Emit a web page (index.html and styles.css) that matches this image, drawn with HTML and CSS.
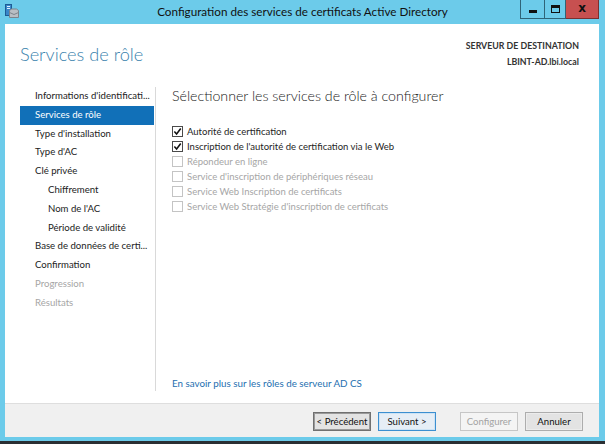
FILE: index.html
```html
<!DOCTYPE html>
<html lang="fr">
<head>
<meta charset="utf-8">
<title>Configuration des services de certificats Active Directory</title>
<link rel="stylesheet" href="styles.css">
</head>
<body>
<div class="window">
  <div class="titlebar">
    <svg class="app-icon" width="14" height="14" viewBox="0 0 14 14">
      <rect x="0.5" y="0.5" width="6" height="11" fill="#3a86c8" stroke="#1d5d96"/>
      <rect x="2" y="2" width="3" height="1" fill="#dff0ff"/>
      <rect x="2" y="4" width="3" height="1" fill="#dff0ff"/>
      <path d="M4.5 6.5 L6.5 5 L11.5 5 L13.5 6.5 L13.5 13.5 L4.5 13.5 Z" fill="#b9bec4" stroke="#7d848c"/>
      <path d="M4.5 8.5 L9 10.5 L13.5 8.5" fill="none" stroke="#7d848c"/>
    </svg>
    <div class="title">Configuration des services de certificats Active Directory</div>
    <div class="controls">
      <div class="ctl ctl-min"><span class="min-glyph"></span></div>
      <div class="ctl ctl-max"><span class="max-glyph"></span></div>
      <div class="ctl ctl-close"><span class="close-glyph">x</span></div>
    </div>
  </div>
  <div class="client">
    <div class="header">
      <div class="page-title">Services de rôle</div>
      <div class="dest">
        <div>SERVEUR DE DESTINATION</div>
        <div>LBINT-AD.lbi.local</div>
      </div>
    </div>
    <div class="body">
      <nav class="steps">
        <div class="step">Informations d'identificati...</div>
        <div class="step selected">Services de rôle</div>
        <div class="step">Type d'installation</div>
        <div class="step">Type d'AC</div>
        <div class="step">Clé privée</div>
        <div class="step sub">Chiffrement</div>
        <div class="step sub">Nom de l'AC</div>
        <div class="step sub">Période de validité</div>
        <div class="step">Base de données de certi...</div>
        <div class="step">Confirmation</div>
        <div class="step disabled">Progression</div>
        <div class="step disabled">Résultats</div>
      </nav>
      <main class="content">
        <div class="content-title">Sélectionner les services de rôle à configurer</div>
        <div class="options">
          <div class="opt"><span class="box checked"><svg width="9" height="9" viewBox="0 0 10 10"><path d="M1.5 5 L4 7.8 L8.6 1.6" fill="none" stroke="#111" stroke-width="1.7"/></svg></span>Autorité de certification</div>
          <div class="opt"><span class="box checked"><svg width="9" height="9" viewBox="0 0 10 10"><path d="M1.5 5 L4 7.8 L8.6 1.6" fill="none" stroke="#111" stroke-width="1.7"/></svg></span>Inscription de l'autorité de certification via le Web</div>
          <div class="opt disabled"><span class="box"></span>Répondeur en ligne</div>
          <div class="opt disabled"><span class="box"></span>Service d'inscription de périphériques réseau</div>
          <div class="opt disabled"><span class="box"></span>Service Web Inscription de certificats</div>
          <div class="opt disabled"><span class="box"></span>Service Web Stratégie d'inscription de certificats</div>
        </div>
        <a class="learn" href="#">En savoir plus sur les rôles de serveur AD CS</a>
      </main>
    </div>
    <div class="footer">
      <button class="btn btn-focus">&lt; Précédent</button>
      <button class="btn btn-default">Suivant &gt;</button>
      <button class="btn btn-disabled gap">Configurer</button>
      <button class="btn">Annuler</button>
    </div>
  </div>
  <div class="bottom-strip"></div>
</div>
</body>
</html>
```

FILE: styles.css
```css
* { box-sizing: border-box; }
html, body { margin: 0; padding: 0; }
body {
  width: 605px;
  height: 444px;
  overflow: hidden;
  background: #6ccbea;
  font-family: "Lato", "Open Sans", sans-serif;
}
.window {
  width: 605px;
  height: 444px;
  display: flex;
  flex-direction: column;
  background: #6ccbea;
}
.titlebar {
  height: 24px;
  display: flex;
  align-items: flex-start;
  position: relative;
}
.app-icon { margin: 4px 0 0 5px; }
.title {
  position: absolute;
  left: 0; right: 0; top: 4px;
  text-align: center;
  font-size: 11.7px;
  color: #111;
  pointer-events: none;
}
.controls {
  margin-left: auto;
  margin-right: 6px;
  display: flex;
  height: 19px;
}
.ctl {
  height: 19px;
  display: flex;
  align-items: center;
  justify-content: center;
  border: 1px solid #2f6478;
  border-top: none;
}
.ctl-min { width: 24px; border-right: none; }
.ctl-max { width: 22px; }
.ctl-close { width: 33px; background: #c75050; border-left: none; border-color: #7a3030; }
.min-glyph { width: 8px; height: 3px; background: #111; margin-top: 4px; }
.max-glyph { width: 9px; height: 8px; border: 1px solid #111; border-top-width: 3px; }
.close-glyph { font: bold 12px "DejaVu Sans", sans-serif; color: #111; line-height: 12px; margin-top: -2px; }

.client {
  margin: 0 6px 0 5px;
  height: 413px;
  background: #fff;
  display: flex;
  flex-direction: column;
}
.header {
  display: flex;
  justify-content: space-between;
  padding: 15px 20px 0 15px;
  height: 63px;
}
.page-title {
  font-weight: 300;
  font-size: 18.2px;
  color: #3a82ad;
  margin-top: 4px;
}
.dest {
  text-align: right;
  font-size: 8.8px;
  font-weight: 700;
  color: #333;
  line-height: 16px;
  margin-top: -1px;
}
.body {
  flex: 1;
  display: flex;
  padding-left: 15px;
}
.steps {
  width: 136px;
  border-right: 1px solid #d9d9d9;
  height: 304px;
}
.step {
  height: 18.8px;
  line-height: 18.8px;
  font-size: 9.6px;
  color: #222;
  padding-left: 15px;
  white-space: nowrap;
  overflow: hidden;
  margin-right: 1px;
}
.step.sub { padding-left: 28px; }
.step.selected { background: #1170b8; color: #fff; }
.step.disabled { color: #a6a6a6; }
.content {
  flex: 1;
  padding-left: 16px;
  display: flex;
  flex-direction: column;
}
.content-title {
  font-weight: 300;
  font-size: 14.2px;
  color: #222;
  line-height: 18px;
}
.options { margin-top: 19px; }
.opt {
  height: 15px;
  display: flex;
  align-items: center;
  font-size: 9.5px;
  color: #1e1e1e;
  white-space: nowrap;
}
.opt.disabled { color: #a6a6a6; }
.box {
  width: 11px;
  height: 11px;
  border: 1px solid #c4c4c4;
  background: #fff;
  margin-right: 4px;
  display: flex;
  align-items: center;
  justify-content: center;
  flex: none;
}
.box.checked { border-color: #4a4a4a; }
.learn {
  margin-top: auto;
  margin-bottom: 14px;
  font-size: 9.8px;
  color: #1e6fb0;
  text-decoration: none;
}
.footer {
  height: 34px;
  background: #f0f0f0;
  border-top: 1px solid #dedede;
  display: flex;
  justify-content: flex-end;
  align-items: flex-start;
  padding: 8px 16px 0 0;
  gap: 7px;
}
.btn {
  width: 58px;
  height: 19px;
  padding: 0;
  font-family: inherit;
  font-size: 9.6px;
  color: #111;
  background: #e3e3e3;
  border: 1px solid #adadad;
  box-shadow: inset 0 0 0 1px #ececec;
  white-space: nowrap;
}
.btn-focus { border-color: #707070; box-shadow: inset 0 0 0 1px #9a9a9a; }
.btn-default { border-color: #3c8fd0; background: #e6eef6; box-shadow: inset 0 0 0 1px #cde3f5; }
.btn-disabled { color: #a3a3a3; background: #f4f4f4; border-color: #c6c6c6; box-shadow: none; }
.btn.gap { margin-left: 17px; }
.bottom-strip {
  margin-top: auto;
  height: 3px;
  background: #2a2f33;
}
```
